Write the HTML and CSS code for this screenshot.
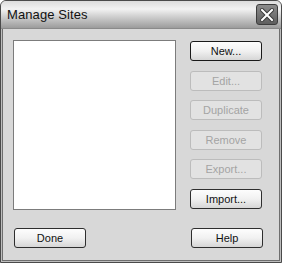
FILE: index.html
```html
<!DOCTYPE html>
<html lang="en">
<head>
    <meta charset="UTF-8">
    <meta name="viewport" content="width=device-width, initial-scale=1.0">
    <title>Manage Sites</title>
    <link rel="stylesheet" href="styles.css">
</head>
<body>
    <div class="window">
        <!-- Title bar -->
        <div class="titlebar">
            <span class="title">Manage Sites</span>
            <button class="close" aria-label="Close">
                <svg width="14" height="14" viewBox="0 0 14 14">
                    <path d="M2 2 L12 12 M12 2 L2 12" stroke="#3a3a3a" stroke-width="4" stroke-linecap="square"/>
                    <path d="M2 2 L12 12 M12 2 L2 12" stroke="#ffffff" stroke-width="2" stroke-linecap="square"/>
                </svg>
            </button>
        </div>

        <!-- Dialog body -->
        <div class="client">
            <div class="main">
                <div class="site-list"></div>
                <div class="actions">
                    <button class="btn default">New...</button>
                    <button class="btn" disabled>Edit...</button>
                    <button class="btn" disabled>Duplicate</button>
                    <button class="btn" disabled>Remove</button>
                    <button class="btn" disabled>Export...</button>
                    <button class="btn">Import...</button>
                </div>
            </div>
            <div class="footer">
                <button class="btn done">Done</button>
                <button class="btn">Help</button>
            </div>
        </div>
    </div>
</body>
</html>
```

FILE: styles.css
```css
/* Basic Reset */
* {
    box-sizing: border-box;
    margin: 0;
    padding: 0;
}

body {
    font-family: "Liberation Sans", Arial, sans-serif;
    background-color: #ffffff;
    color: #000;
}

.window {
    width: 282px;
    height: 263px;
    border: 1px solid #4a4a4a;
    border-radius: 6px 6px 0 0;
    background: #bdbdbd;
    display: flex;
    flex-direction: column;
    overflow: hidden;
}

/* Title bar */
.titlebar {
    height: 28px;
    flex-shrink: 0;
    display: flex;
    align-items: center;
    padding: 0 3px 0 6px;
    background: linear-gradient(#dcdcdc 0%, #f2f2f2 30%, #c6c6c6 65%, #9c9c9c 100%);
    border-bottom: 1px solid #8a8a8a;
}

.title {
    font-size: 13px;
    color: #111;
    letter-spacing: 0.1px;
}

.close {
    margin-left: auto;
    width: 22px;
    height: 21px;
    border: 1px solid #3c3c3c;
    border-radius: 3px;
    background: linear-gradient(#8c8c8c, #5e5e5e);
    display: flex;
    align-items: center;
    justify-content: center;
}

/* Client area */
.client {
    flex: 1;
    margin: 0 1px 1px 1px;
    border: 1px solid #6e6e6e;
    border-top: none;
    background: #d8d8d8;
    padding: 11px 16px 12px 10px;
    display: flex;
    flex-direction: column;
}

.main {
    display: flex;
    gap: 14px;
    height: 170px;
}

.site-list {
    width: 163px;
    background: #fff;
    border: 1px solid #7c7c7c;
}

.actions {
    display: flex;
    flex-direction: column;
    gap: 9.6px;
    padding-top: 1px;
}

.btn {
    width: 72px;
    height: 20px;
    font-family: "Liberation Sans", Arial, sans-serif;
    font-size: 11px;
    color: #111;
    border: 1px solid #2e2e2e;
    border-radius: 3px;
    background: linear-gradient(#fdfdfd 0%, #f1f1f1 50%, #d6d6d6 100%);
}

.btn.default {
    border-color: #1a1a1a;
}

.btn:disabled {
    color: #a4a4a4;
    border-color: #bcbcbc;
    background: #e2e2e2;
}

.footer {
    margin-top: auto;
    display: flex;
    justify-content: space-between;
    padding-left: 1px;
}
```
